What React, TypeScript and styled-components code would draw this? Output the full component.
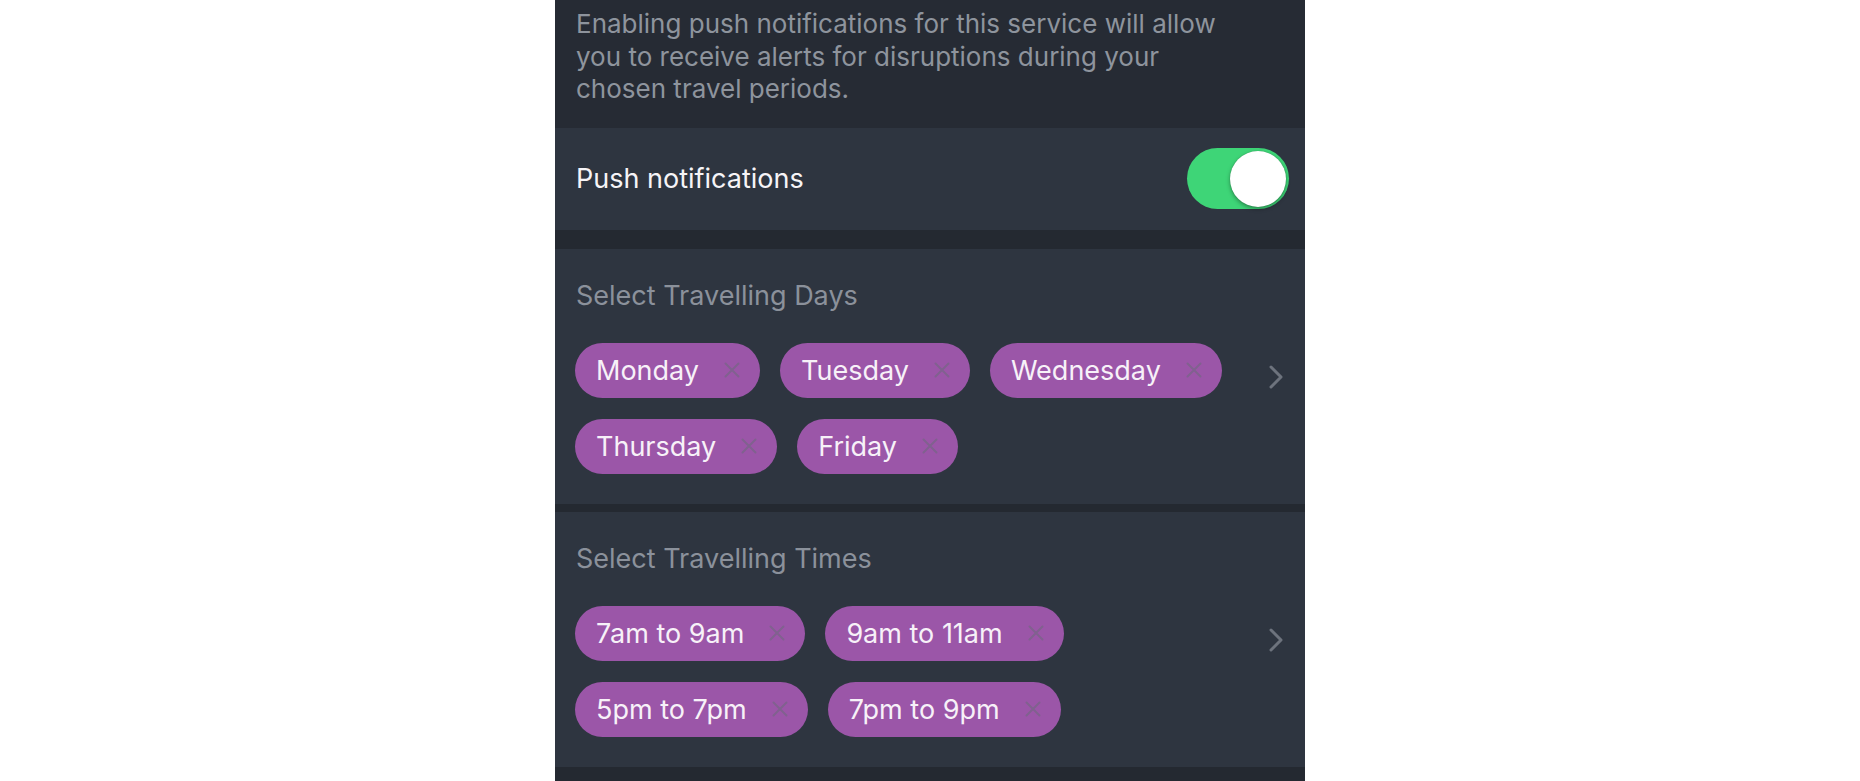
import styled, { createGlobalStyle } from "styled-components";

const GlobalStyle = createGlobalStyle`
    html, body {
        margin: 0;
        padding: 0;
        background: #ffffff;
    }
    body {
        font-family: Inter, "Noto Sans", sans-serif;
        -webkit-font-smoothing: antialiased;
    }
`;

const Page = styled.div`
    display: flex;
    justify-content: center;
    height: 781px;
    overflow: hidden;
`;

const Screen = styled.div`
    width: 750px;
    display: flex;
    flex-direction: column;
    background-color: #242931;
`;

const Intro = styled.p`
    margin: 0;
    padding: 8px 59px 22px 21px;
    background-color: #262b34;
    color: #8e949d;
    font-size: 26px;
    line-height: 32.5px;
`;

const ToggleRow = styled.div`
    height: 102px;
    display: flex;
    align-items: center;
    justify-content: space-between;
    padding: 0 16px 0 21px;
    background-color: #2e3540;
    color: #f6f4f7;
    font-size: 27px;
`;

const Switch = styled.div<{ $on: boolean }>`
    width: 102px;
    height: 61px;
    border-radius: 31px;
    background-color: ${(p) => (p.$on ? "#3ed577" : "#4a515c")};
    display: flex;
    align-items: center;
    justify-content: ${(p) => (p.$on ? "flex-end" : "flex-start")};
    padding: 0 3px;
    box-sizing: border-box;
`;

const Knob = styled.div`
    width: 56px;
    height: 56px;
    border-radius: 50%;
    background: #ffffff;
    box-shadow: 0 2px 4px rgba(0, 0, 0, 0.35), 0 0 1px rgba(0, 0, 0, 0.3);
`;

const Section = styled.section<{ $gap: number }>`
    margin-top: ${(p) => p.$gap}px;
    padding: 30px 22px 30px 20px;
    background-color: #2e3540;
`;

const SectionTitle = styled.h3`
    margin: 0 0 0 1px;
    font-weight: 400;
    font-size: 27px;
    line-height: 33px;
    color: #8b919b;
`;

const SectionBody = styled.div`
    display: flex;
    align-items: flex-start;
    margin-top: 31px;
`;

const ChipList = styled.div`
    flex: 1;
    display: flex;
    flex-wrap: wrap;
    gap: 21px 20px;
`;

const Chip = styled.div`
    height: 55px;
    display: flex;
    align-items: center;
    gap: 25px;
    padding: 0 20px 0 21px;
    border-radius: 28px;
    background-color: #9b56a8;
    color: #f7f1f8;
    font-size: 27px;
`;

const ChevronWrap = styled.div`
    margin-top: 22px;
    margin-left: 20px;
    display: flex;
`;

function CloseIcon() {
    return (
        <svg width="16" height="16" viewBox="0 0 16 16">
            <path d="M1.5 1.5 L14.5 14.5 M14.5 1.5 L1.5 14.5" stroke="#80618f" strokeWidth="2" strokeLinecap="round" />
        </svg>
    );
}

function Chevron() {
    return (
        <svg width="14" height="24" viewBox="0 0 14 24">
            <path d="M2 2 L12 12 L2 22" fill="none" stroke="#6d737d" strokeWidth="3" strokeLinecap="round" strokeLinejoin="round" />
        </svg>
    );
}

const days = ["Monday", "Tuesday", "Wednesday", "Thursday", "Friday"];
const times = ["7am to 9am", "9am to 11am", "5pm to 7pm", "7pm to 9pm"];

function Picker({ title, items, gap }: { title: string; items: string[]; gap: number }) {
    return (
        <Section $gap={gap}>
            <SectionTitle>{title}</SectionTitle>
            <SectionBody>
                <ChipList>
                    {items.map((item) => (
                        <Chip key={item}>
                            {item}
                            <CloseIcon />
                        </Chip>
                    ))}
                </ChipList>
                <ChevronWrap>
                    <Chevron />
                </ChevronWrap>
            </SectionBody>
        </Section>
    );
}

export default function App() {
    return (
        <Page>
            <GlobalStyle />
            <Screen>
                <Intro>
                    Enabling push notifications for this service will allow you to receive alerts for disruptions during your
                    chosen travel periods.
                </Intro>
                <ToggleRow>
                    Push notifications
                    <Switch $on>
                        <Knob />
                    </Switch>
                </ToggleRow>
                <Picker title="Select Travelling Days" items={days} gap={19} />
                <Picker title="Select Travelling Times" items={times} gap={8} />
            </Screen>
        </Page>
    );
}
